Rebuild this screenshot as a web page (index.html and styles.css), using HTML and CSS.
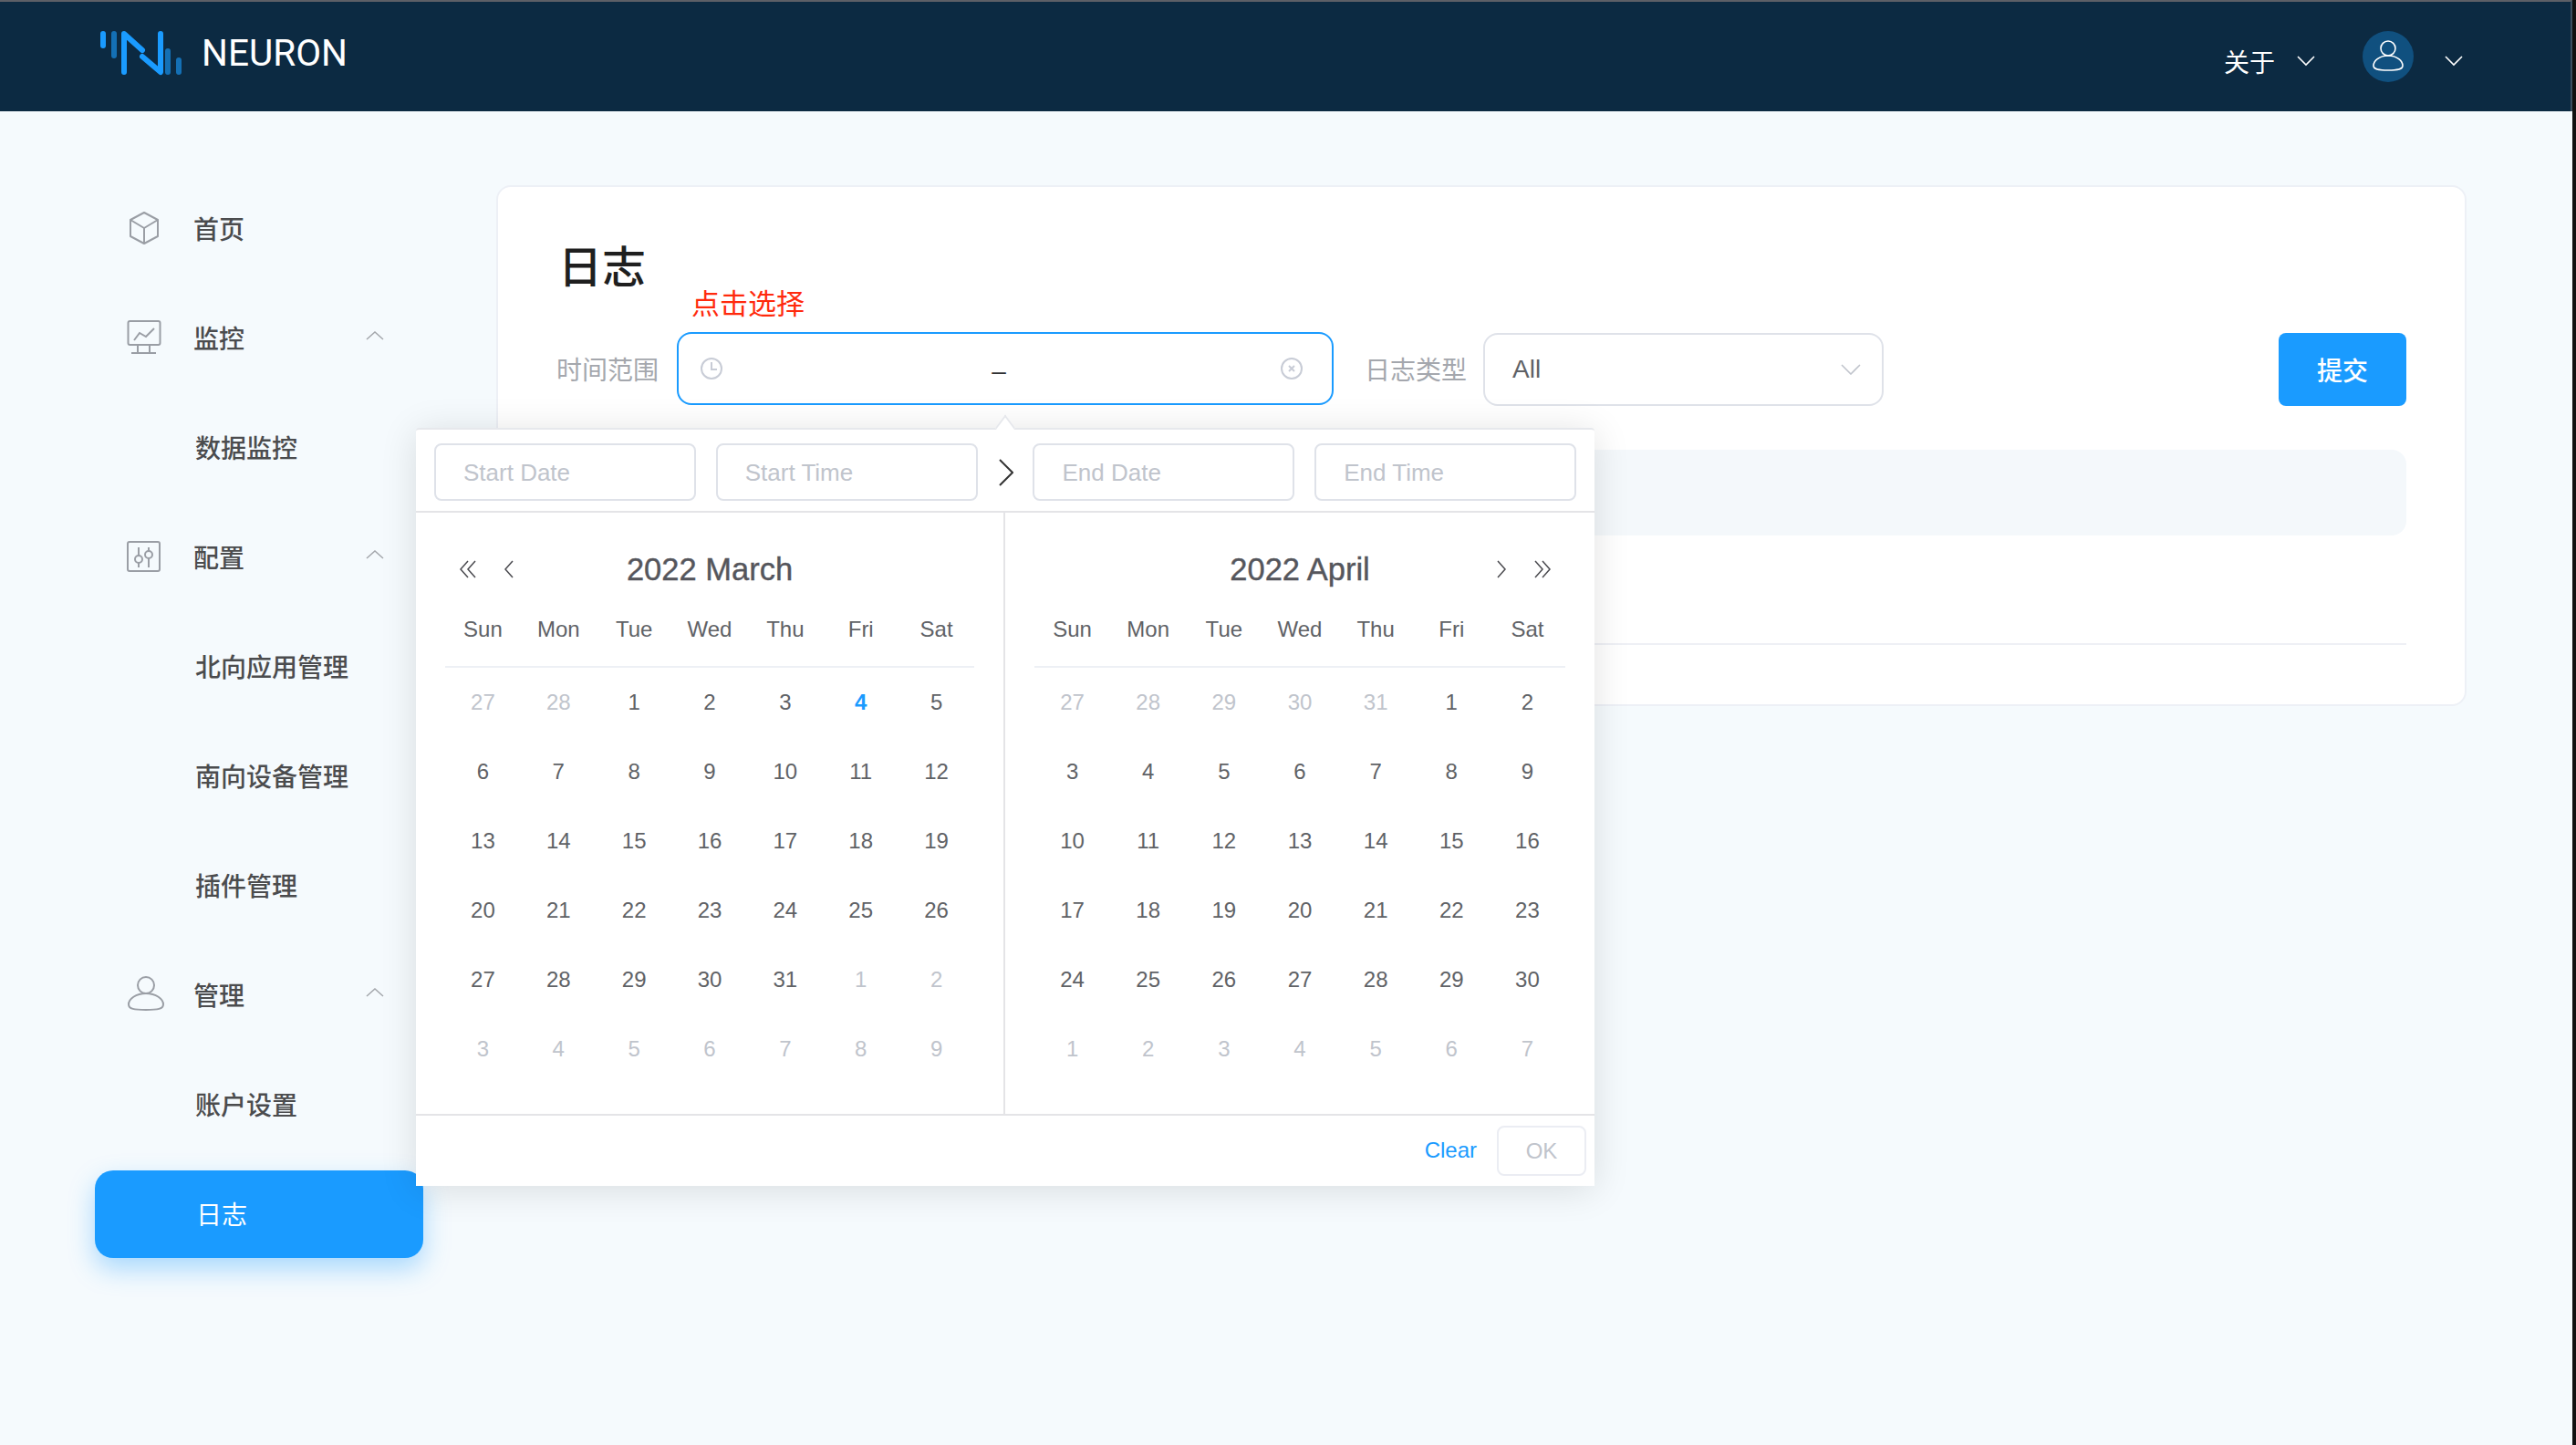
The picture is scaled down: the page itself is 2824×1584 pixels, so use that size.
FILE: index.html
```html
<!DOCTYPE html>
<html lang="zh">
<head>
    <meta charset="UTF-8">
    <title>NEURON</title>
    <link rel="stylesheet" href="styles.css">
</head>
<body>
<div class="page">
    <header class="topbar">
        <div class="brand">
            <svg class="logo" width="90" height="50" viewBox="0 0 90 50" fill="none" stroke-width="6" stroke-linecap="round" stroke-linejoin="round">
                <path d="M3 4V17" stroke="#1a9bff"/>
                <path d="M15 4V28" stroke="#1470b5"/>
                <path d="M26 46V4L46 22" stroke="#1a9bff"/>
                <path d="M46 29L66 46V4" stroke="#1a9bff"/>
                <path d="M74 23V46" stroke="#1470b5"/>
                <path d="M86 33V46" stroke="#1470b5"/>
            </svg>
            <span class="brand-name">NEURON</span>
        </div>
        <div class="top-actions">
            <span class="about">关于</span>
            <svg class="top-chev" width="20" height="12" viewBox="0 0 20 12" fill="none" stroke="#fff" stroke-width="1.6"><path d="M1 1L10 10L19 1"/></svg>
            <span class="avatar">
                <svg width="40" height="40" viewBox="0 0 40 40" fill="none" stroke="#fff" stroke-width="1.6">
                    <circle cx="20" cy="11" r="8"/>
                    <path d="M20 19C10 19 4 25 4 30C4 34 9 35 20 35S36 34 36 30C36 25 30 19 20 19Z"/>
                </svg>
            </span>
            <svg class="top-chev" width="20" height="12" viewBox="0 0 20 12" fill="none" stroke="#fff" stroke-width="1.6"><path d="M1 1L10 10L19 1"/></svg>
        </div>
    </header>

    <div class="layout">
        <nav class="sidebar">
            <a class="nav-item">
                <svg class="nav-icon" width="40" height="40" viewBox="0 0 40 40" fill="none" stroke="#9a9ea5" stroke-width="2" stroke-linejoin="round">
                    <path d="M20 3L35 11V29L20 37L5 29V11Z"/>
                    <path d="M5 11L20 20L35 11M20 20V37"/>
                </svg>
                <span>首页</span>
            </a>
            <a class="nav-item">
                <svg class="nav-icon" width="40" height="40" viewBox="0 0 40 40" fill="none" stroke="#9a9ea5" stroke-width="2">
                    <rect x="2.500" y="2" width="35" height="26" rx="2"/>
                    <path d="M9 23L15 15L22 19L31 10"/>
                    <path d="M13 28V36M26 28V36M6 37H33"/>
                </svg>
                <span>监控</span>
                <svg class="nav-chev" width="20" height="10" viewBox="0 0 20 10" fill="none" stroke="#a3a6ab" stroke-width="1.500"><path d="M1 9L10 1L19 9"/></svg>
            </a>
            <a class="nav-item sub">数据监控</a>
            <a class="nav-item">
                <svg class="nav-icon" width="40" height="40" viewBox="0 0 40 40" fill="none" stroke="#9a9ea5" stroke-width="2">
                    <rect x="2" y="4" width="35" height="32" rx="2"/>
                    <path d="M14 10V32M25 10V32"/>
                    <circle cx="14" cy="23" r="4" fill="#f5fafd"/>
                    <circle cx="25" cy="18" r="4" fill="#f5fafd"/>
                </svg>
                <span>配置</span>
                <svg class="nav-chev" width="20" height="10" viewBox="0 0 20 10" fill="none" stroke="#a3a6ab" stroke-width="1.500"><path d="M1 9L10 1L19 9"/></svg>
            </a>
            <a class="nav-item sub">北向应用管理</a>
            <a class="nav-item sub">南向设备管理</a>
            <a class="nav-item sub">插件管理</a>
            <a class="nav-item">
                <svg class="nav-icon person" width="40" height="40" viewBox="0 0 40 40" fill="none" stroke="#9a9ea5" stroke-width="2">
                    <circle cx="20" cy="10" r="9"/>
                    <path d="M20 19C9 19 1 25 1 31C1 36 7 37 20 37S39 36 39 31C39 25 31 19 20 19Z"/>
                </svg>
                <span>管理</span>
                <svg class="nav-chev" width="20" height="10" viewBox="0 0 20 10" fill="none" stroke="#a3a6ab" stroke-width="1.500"><path d="M1 9L10 1L19 9"/></svg>
            </a>
            <a class="nav-item sub">账户设置</a>
            <a class="nav-item sub active">日志</a>
        </nav>

        <main class="content">
            <section class="card">
                <h1 class="card-title">日志</h1>
                <p class="hint">点击选择</p>

                <div class="filter-row">
                    <label class="filter-label">时间范围</label>
                    <div class="picker">
                        <div class="range-input">
                            <svg width="24" height="24" viewBox="0 0 24 24" fill="none" stroke="#c8ccd6" stroke-width="2"><circle cx="12" cy="12" r="11"/><path d="M12 5V13H18"/></svg>
                            <span class="range-dash">–</span>
                            <svg width="24" height="24" viewBox="0 0 24 24" fill="none" stroke="#c8ccd6" stroke-width="2"><circle cx="12" cy="12" r="11"/><path d="M9 9L15 15M15 9L9 15"/></svg>
                        </div>

                        <div class="popup">
                            <span class="popup-arrow"></span>
                            <div class="popup-inputs">
                                <div class="time-box">Start Date</div>
                                <div class="time-box">Start Time</div>
                                <svg class="popup-sep" width="18" height="30" viewBox="0 0 18 30" fill="none" stroke="#333" stroke-width="2"><path d="M2 1L16 15L2 29"/></svg>
                                <div class="time-box">End Date</div>
                                <div class="time-box">End Time</div>
                            </div>

                            <div class="calendars">
                                <div class="cal">
                                    <div class="cal-head">
                                        <div class="cal-nav">
                                            <svg width="18" height="20" viewBox="0 0 18 20" fill="none" stroke="#4a4a4f" stroke-width="1.500"><path d="M9 1L1 10L9 19M17 1L9 10L17 19"/></svg>
                                            <svg width="10" height="20" viewBox="0 0 10 20" fill="none" stroke="#4a4a4f" stroke-width="1.500"><path d="M9 1L1 10L9 19"/></svg>
                                        </div>
                                        <span class="cal-title">2022 March</span>
                                        <div class="cal-nav"></div>
                                    </div>
                                    <div class="week">
                                        <span>Sun</span><span>Mon</span><span>Tue</span><span>Wed</span><span>Thu</span><span>Fri</span><span>Sat</span>
                                    </div>
                                    <div class="days">
                                        <span class="off">27</span><span class="off">28</span><span>1</span><span>2</span><span>3</span><span class="today">4</span><span>5</span>
                                        <span>6</span><span>7</span><span>8</span><span>9</span><span>10</span><span>11</span><span>12</span>
                                        <span>13</span><span>14</span><span>15</span><span>16</span><span>17</span><span>18</span><span>19</span>
                                        <span>20</span><span>21</span><span>22</span><span>23</span><span>24</span><span>25</span><span>26</span>
                                        <span>27</span><span>28</span><span>29</span><span>30</span><span>31</span><span class="off">1</span><span class="off">2</span>
                                        <span class="off">3</span><span class="off">4</span><span class="off">5</span><span class="off">6</span><span class="off">7</span><span class="off">8</span><span class="off">9</span>
                                    </div>
                                </div>
                                <div class="cal">
                                    <div class="cal-head">
                                        <div class="cal-nav"></div>
                                        <span class="cal-title">2022 April</span>
                                        <div class="cal-nav right">
                                            <svg width="10" height="20" viewBox="0 0 10 20" fill="none" stroke="#4a4a4f" stroke-width="1.500"><path d="M1 1L9 10L1 19"/></svg>
                                            <svg width="18" height="20" viewBox="0 0 18 20" fill="none" stroke="#4a4a4f" stroke-width="1.500"><path d="M1 1L9 10L1 19M9 1L17 10L9 19"/></svg>
                                        </div>
                                    </div>
                                    <div class="week">
                                        <span>Sun</span><span>Mon</span><span>Tue</span><span>Wed</span><span>Thu</span><span>Fri</span><span>Sat</span>
                                    </div>
                                    <div class="days">
                                        <span class="off">27</span><span class="off">28</span><span class="off">29</span><span class="off">30</span><span class="off">31</span><span>1</span><span>2</span>
                                        <span>3</span><span>4</span><span>5</span><span>6</span><span>7</span><span>8</span><span>9</span>
                                        <span>10</span><span>11</span><span>12</span><span>13</span><span>14</span><span>15</span><span>16</span>
                                        <span>17</span><span>18</span><span>19</span><span>20</span><span>21</span><span>22</span><span>23</span>
                                        <span>24</span><span>25</span><span>26</span><span>27</span><span>28</span><span>29</span><span>30</span>
                                        <span class="off">1</span><span class="off">2</span><span class="off">3</span><span class="off">4</span><span class="off">5</span><span class="off">6</span><span class="off">7</span>
                                    </div>
                                </div>
                            </div>

                            <div class="popup-foot">
                                <a class="clear-link">Clear</a>
                                <span class="ok-btn">OK</span>
                            </div>
                        </div>
                    </div>

                    <label class="filter-label second">日志类型</label>
                    <div class="select-box">
                        <span>All</span>
                        <svg width="22" height="12" viewBox="0 0 22 12" fill="none" stroke="#c0c4cc" stroke-width="1.600"><path d="M1 1L11 11L21 1"/></svg>
                    </div>
                    <button class="submit-btn">提交</button>
                </div>

                <div class="table-head"></div>
                <div class="table-body"></div>
            </section>
        </main>
    </div>
</div>
</body>
</html>
```

FILE: styles.css
```css
* {
    box-sizing: border-box;
}
body {
    margin: 0;
    background-color: #111;
    font-family: "Liberation Sans", "Noto Sans CJK SC", sans-serif;
    color: #606266;
}
.page {
    width: 2820px;
    height: 1584px;
    background-color: #f5fafd;
}

/* top bar */
.topbar {
    height: 122px;
    display: flex;
    justify-content: space-between;
    background-color: #0c2a42;
    border-top: 2px solid #5d5f66;
    border-right: 2px solid #3c4f60;
}
.brand {
    display: flex;
    align-items: center;
    height: 112px;
    padding-left: 110px;
}
.logo {
    margin-right: 21px;
}
.brand-name {
    font-family: Roboto, sans-serif;
    font-size: 40.5px;
    color: #fff;
}
.top-actions {
    display: flex;
    align-items: center;
    padding-right: 118px;
    padding-top: 10px;
    color: #fff;
}
.about {
    font-size: 28px;
    font-family: "Noto Sans CJK SC", sans-serif;
}
.top-chev {
    margin-left: 24px;
}
.avatar {
    width: 56px;
    height: 56px;
    margin: -10px 34px 0 52px;
    display: flex;
    align-items: center;
    justify-content: center;
    border-radius: 50%;
    background-color: #10507f;
}
.avatar + .top-chev {
    margin-left: 0;
}

.layout {
    display: flex;
}

/* side menu */
.sidebar {
    width: 544px;
    padding: 81px 0 0 104px;
    flex-shrink: 0;
}
.nav-item {
    display: flex;
    align-items: center;
    width: 360px;
    height: 96px;
    margin-bottom: 24px;
    padding: 0 43px 2px 34px;
    border-radius: 20px;
    font-family: "Noto Sans CJK SC", sans-serif;
    font-size: 28px;
    font-weight: 500;
    color: #4b4c4e;
}
.nav-icon {
    margin-right: 34px;
    flex-shrink: 0;
}
.nav-icon.person {
    margin-left: 2px;
    margin-right: 32px;
}
.nav-chev {
    margin-left: auto;
    margin-top: -4px;
}
.nav-item.sub {
    padding-left: 110px;
}
.nav-item.active {
    padding-left: 111px;
    color: #fff;
    font-weight: 400;
    background-color: #1a9bff;
    box-shadow: 0 12px 28px rgba(26, 155, 255, 0.35);
}

/* main card */
.content {
    flex: 1;
    padding: 81px 116px 0 0;
}
.card {
    height: 571px;
    padding: 60px 64px 0 66px;
    background-color: #fff;
    border: 2px solid #edf0f6;
    border-radius: 16px;
}
.card-title {
    margin: 0;
    font-family: "Noto Sans CJK SC", sans-serif;
    font-size: 48px;
    font-weight: 500;
    line-height: 48px;
    color: #1f1f1f;
}
.hint {
    margin: 3px 0 18px 146px;
    font-family: "Noto Sans CJK SC", sans-serif;
    font-size: 31px;
    line-height: 30px;
    color: #ff2a0d;
}
.filter-row {
    display: flex;
    align-items: flex-start;
    height: 81px;
}
.filter-label {
    width: 132px;
    margin-left: -2px;
    font-family: "Noto Sans CJK SC", sans-serif;
    font-size: 28px;
    line-height: 80px;
    color: #a4a7ad;
}
.filter-label.second {
    width: 130px;
    margin-left: 34px;
}
.picker {
    position: relative;
}
.range-input {
    width: 720px;
    height: 80px;
    display: flex;
    align-items: center;
    justify-content: space-between;
    padding: 0 32px 0 24px;
    border: 2px solid #1a9bff;
    border-radius: 16px;
}
.range-dash {
    margin: 6px 6px 0 0;
    font-size: 28px;
    color: #303133;
}
.select-box {
    width: 439px;
    height: 80px;
    margin-top: 1px;
    display: flex;
    align-items: center;
    justify-content: space-between;
    padding: 0 23px 0 30px;
    border: 2px solid #dfe2e9;
    border-radius: 16px;
    font-size: 28px;
    color: #606266;
}
.submit-btn {
    margin: 1px 0 0 auto;
    width: 140px;
    height: 80px;
    border: none;
    border-radius: 8px;
    background-color: #1a9bff;
    font-family: "Noto Sans CJK SC", sans-serif;
    font-size: 28px;
    font-weight: 500;
    color: #fff;
}
.table-head {
    height: 94px;
    margin-top: 48px;
    border-radius: 16px;
    background-color: #f4f8fb;
}
.table-body {
    height: 120px;
    border-bottom: 2px solid #eef0f5;
}

/* date range popup */
.popup {
    position: absolute;
    top: 105px;
    left: -286px;
    width: 1292px;
    height: 831px;
    background-color: #fff;
    border-top: 2px solid #e6e8ec;
    border-radius: 4px 4px 0 0;
    box-shadow: 0 4px 40px rgba(0, 0, 0, 0.12);
    z-index: 10;
}
.popup-arrow {
    position: absolute;
    top: -11px;
    left: 637px;
    width: 18px;
    height: 18px;
    background-color: #fff;
    border-top: 2px solid #e6e8ec;
    border-left: 2px solid #e6e8ec;
    transform: rotate(45deg) skew(8deg, 8deg);
}
.popup-inputs {
    height: 91px;
    display: flex;
    align-items: center;
    padding: 4px 20px 0;
    border-bottom: 2px solid #e4e4e7;
}
.time-box {
    width: 287px;
    height: 63px;
    margin-right: 22px;
    padding-left: 30px;
    border: 2px solid #dfe2e9;
    border-radius: 8px;
    font-size: 26px;
    line-height: 60px;
    color: #c0c4cc;
}
.time-box:nth-child(2) {
    margin-right: 0;
}
.time-box:last-child {
    margin-right: 0;
}
.popup-sep {
    margin: 0 21px 0 22px;
}
.calendars {
    display: flex;
    height: 661px;
    border-bottom: 2px solid #e4e4e7;
}
.cal {
    width: 646px;
    padding: 0 32px;
}
.cal:first-child {
    width: 646px;
    border-right: 2px solid #e4e4e7;
}
.cal-head {
    display: flex;
    align-items: center;
    height: 44px;
    margin-top: 40px;
}
.cal-nav {
    flex: 1;
    display: flex;
    align-items: center;
    gap: 31px;
    padding: 0 16px;
}
.cal-nav.right {
    justify-content: flex-end;
}
.cal-title {
    font-size: 34.5px;
    color: #55565c;
    -webkit-text-stroke: 0.4px #55565c;
}
.week {
    display: grid;
    grid-template-columns: repeat(7, 1fr);
    height: 86px;
    padding-top: 24px;
    border-bottom: 2px solid #edf0f5;
    font-size: 24px;
    line-height: 40px;
    text-align: center;
}
.days {
    display: grid;
    grid-template-columns: repeat(7, 1fr);
    grid-auto-rows: 76px;
    font-size: 24px;
    line-height: 76px;
    text-align: center;
}
.days .off {
    color: #c0c4cc;
}
.days .today {
    color: #1a9bff;
    font-weight: 700;
}
.popup-foot {
    height: 76px;
    display: flex;
    align-items: center;
    justify-content: flex-end;
    padding-right: 9px;
    font-size: 24px;
}
.clear-link {
    margin-right: 22px;
    color: #1a9bff;
}
.ok-btn {
    width: 98px;
    height: 55px;
    border: 2px solid #ebedf3;
    border-radius: 8px;
    line-height: 51px;
    text-align: center;
    color: #c0c4cc;
}
```
